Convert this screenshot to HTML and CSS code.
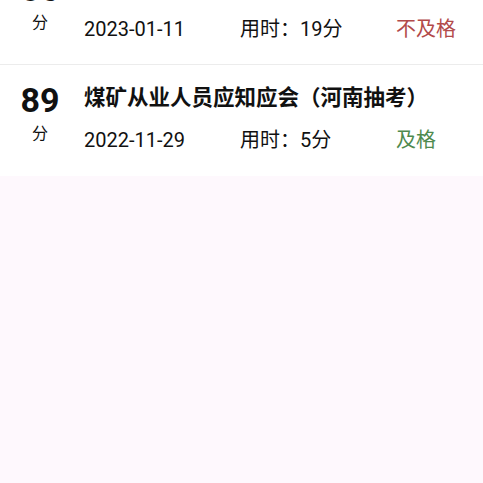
FILE: index.html
```html
<!DOCTYPE html>
<html>
<head>
	<meta charset="utf-8">
	<meta name="viewport" content="width=device-width, initial-scale=1">
	<title>考试记录</title>
	<link rel="stylesheet" href="styles.css">
</head>
<body>
<div class="records">
	<div class="record">
		<div class="score">
			<b>56</b>
			<span>分</span>
		</div>
		<div class="info">
			<div class="title">煤矿从业人员应知应会（河南抽考）</div>
			<div class="meta">
				<span class="date">2023-01-11</span>
				<span class="time">用时：19分</span>
				<span class="result fail">不及格</span>
			</div>
		</div>
	</div>
	<div class="record">
		<div class="score">
			<b>89</b>
			<span>分</span>
		</div>
		<div class="info">
			<div class="title">煤矿从业人员应知应会（河南抽考）</div>
			<div class="meta">
				<span class="date">2022-11-29</span>
				<span class="time">用时：5分</span>
				<span class="result pass">及格</span>
			</div>
		</div>
	</div>
</div>
</body>
</html>
```

FILE: styles.css
```css
*
{
	margin: 0;
	padding: 0;
	box-sizing: border-box;
}
body
{
	background: #fef8fd;
	font-family: Roboto, "Noto Sans CJK SC", sans-serif;
	color: #111;
	overflow: hidden;
}
.records
{
	margin-top: -46px;
	background: #fff;
}
.record
{
	display: flex;
	height: 111px;
	padding-top: 18px;
	border-bottom: 1px solid #ececec;
}
.record:last-child
{
	border-bottom: none;
}
.score
{
	width: 64px;
	margin-left: 8px;
	display: flex;
	flex-direction: column;
	align-items: center;
}
.score b
{
	font-size: 34px;
	line-height: 34px;
	font-weight: 700;
}
.score span
{
	font-size: 16px;
	line-height: 22px;
	margin-top: 6px;
}
.info
{
	margin-left: 12px;
	flex: 1;
}
.title
{
	font-size: 21.5px;
	line-height: 30px;
	font-weight: 700;
}
.meta
{
	display: flex;
	margin-top: 15px;
	font-size: 20px;
	line-height: 24px;
}
.date
{
	width: 156px;
}
.time
{
	width: 156px;
}
.fail
{
	color: #b24a4a;
}
.pass
{
	color: #4e8a4e;
}
```
